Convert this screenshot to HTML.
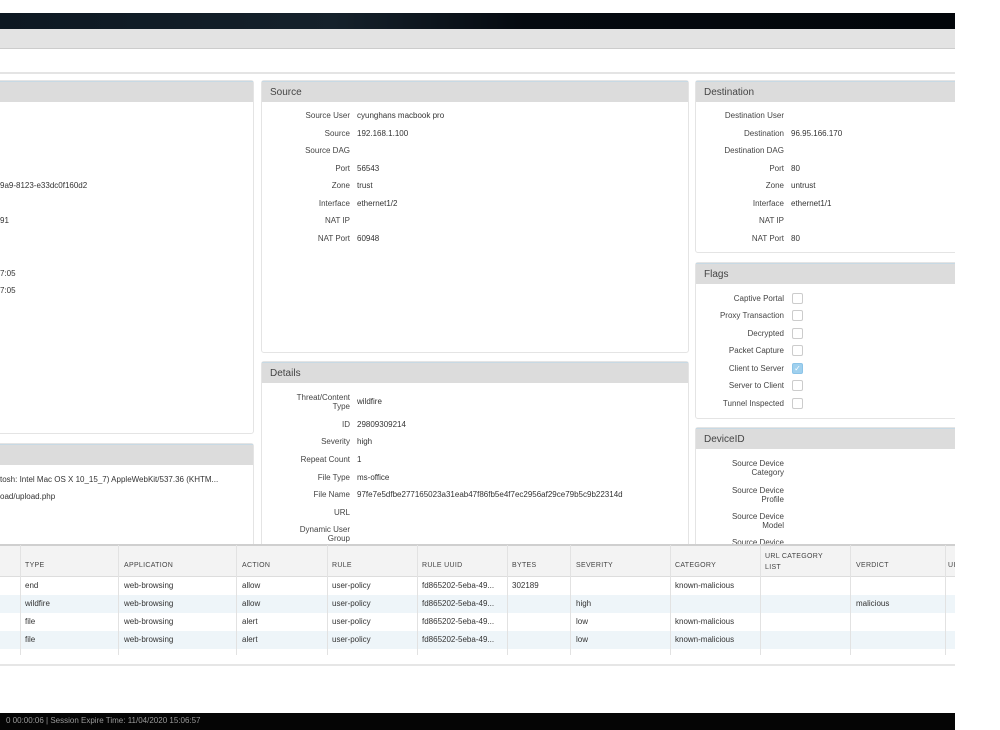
<!DOCTYPE html>
<html><head><meta charset="utf-8"><style>
*{margin:0;padding:0;box-sizing:border-box}
body{width:1000px;height:730px;background:#fff;position:relative;overflow:hidden;font-family:"Liberation Sans",sans-serif;color:#333}
.a{position:absolute}
.p{position:absolute;border:1px solid #e4e4e4;border-radius:3px;background:#fff}
.h{position:absolute;left:0;right:0;top:0;height:21px;background:#dcdcdc;border-top:1px solid #c7d9e4;font-size:10px;color:#444;padding:5px 0 0 8px}
.l{position:absolute;font-size:8px;text-align:right;width:120px;line-height:9px;color:#444}
.v{position:absolute;font-size:8px;line-height:9px;color:#333;white-space:nowrap}
.cb{position:absolute;width:11px;height:11px;border:1px solid #ccc;border-radius:2px;background:#fff}
.th{position:absolute;font-size:7px;color:#444;letter-spacing:.3px}
.td{position:absolute;font-size:8px;color:#333;white-space:nowrap}
.cl{position:absolute;top:545px;height:110px;width:1px;background:#e2e2e2}
.clip{position:absolute;left:0;top:0;width:955px;height:730px;overflow:hidden}
</style></head><body>
<div class="clip">
<div class="a" style="left:0;top:13px;width:955px;height:16px;background:linear-gradient(90deg,#0d1822,#15212b 35%,#050a10 55%,#02060a)"></div>
<div class="a" style="left:0;top:29px;width:955px;height:20px;background:#e3e3e3;border-bottom:1px solid #ccc"></div>
<div class="a" style="left:0;top:72px;width:955px;height:2px;background:#e4e4e4"></div>

<div class="p" style="left:-3px;top:80px;width:257px;height:354px"><div class="h"></div></div>
<div class="v" style="left:0;top:181px">9a9-8123-e33dc0f160d2</div>
<div class="v" style="left:0;top:216px">91</div>
<div class="v" style="left:0;top:269px">7:05</div>
<div class="v" style="left:0;top:286px">7:05</div>
<div class="p" style="left:-3px;top:443px;width:257px;height:110px"><div class="h"></div></div>
<div class="v" style="left:0;top:475px">tosh: Intel Mac OS X 10_15_7) AppleWebKit/537.36 (KHTM...</div>
<div class="v" style="left:0;top:492px">oad/upload.php</div>

<div class="p" style="left:261px;top:80px;width:428px;height:273px"><div class="h">Source</div></div>
<div class="l" style="left:230px;top:111px">Source User</div><div class="v" style="left:357px;top:111px">cyunghans macbook pro</div>
<div class="l" style="left:230px;top:129px">Source</div><div class="v" style="left:357px;top:129px">192.168.1.100</div>
<div class="l" style="left:230px;top:146px">Source DAG</div>
<div class="l" style="left:230px;top:164px">Port</div><div class="v" style="left:357px;top:164px">56543</div>
<div class="l" style="left:230px;top:181px">Zone</div><div class="v" style="left:357px;top:181px">trust</div>
<div class="l" style="left:230px;top:199px">Interface</div><div class="v" style="left:357px;top:199px">ethernet1/2</div>
<div class="l" style="left:230px;top:216px">NAT IP</div>
<div class="l" style="left:230px;top:234px">NAT Port</div><div class="v" style="left:357px;top:234px">60948</div>

<div class="p" style="left:261px;top:361px;width:428px;height:195px"><div class="h">Details</div></div>
<div class="l" style="left:230px;top:393px">Threat/Content<br>Type</div><div class="v" style="left:357px;top:397px">wildfire</div>
<div class="l" style="left:230px;top:420px">ID</div><div class="v" style="left:357px;top:420px">29809309214</div>
<div class="l" style="left:230px;top:437px">Severity</div><div class="v" style="left:357px;top:437px">high</div>
<div class="l" style="left:230px;top:455px">Repeat Count</div><div class="v" style="left:357px;top:455px">1</div>
<div class="l" style="left:230px;top:473px">File Type</div><div class="v" style="left:357px;top:473px">ms-office</div>
<div class="l" style="left:230px;top:490px">File Name</div><div class="v" style="left:357px;top:490px">97fe7e5dfbe277165023a31eab47f86fb5e4f7ec2956af29ce79b5c9b22314d</div>
<div class="l" style="left:230px;top:508px">URL</div>
<div class="l" style="left:230px;top:525px">Dynamic User<br>Group</div>

<div class="p" style="left:695px;top:80px;width:270px;height:173px"><div class="h">Destination</div></div>
<div class="l" style="left:664px;top:111px">Destination User</div>
<div class="l" style="left:664px;top:129px">Destination</div><div class="v" style="left:791px;top:129px">96.95.166.170</div>
<div class="l" style="left:664px;top:146px">Destination DAG</div>
<div class="l" style="left:664px;top:164px">Port</div><div class="v" style="left:791px;top:164px">80</div>
<div class="l" style="left:664px;top:181px">Zone</div><div class="v" style="left:791px;top:181px">untrust</div>
<div class="l" style="left:664px;top:199px">Interface</div><div class="v" style="left:791px;top:199px">ethernet1/1</div>
<div class="l" style="left:664px;top:216px">NAT IP</div>
<div class="l" style="left:664px;top:234px">NAT Port</div><div class="v" style="left:791px;top:234px">80</div>

<div class="p" style="left:695px;top:262px;width:270px;height:157px"><div class="h">Flags</div></div>
<div class="l" style="left:664px;top:294px">Captive Portal</div><div class="cb" style="left:792px;top:293px"></div>
<div class="l" style="left:664px;top:311px">Proxy Transaction</div><div class="cb" style="left:792px;top:310px"></div>
<div class="l" style="left:664px;top:329px">Decrypted</div><div class="cb" style="left:792px;top:328px"></div>
<div class="l" style="left:664px;top:346px">Packet Capture</div><div class="cb" style="left:792px;top:345px"></div>
<div class="l" style="left:664px;top:364px">Client to Server</div><div class="cb" style="left:792px;top:363px;background:#9fd0ee;border-color:#8cc4e8;color:#fff;font-size:8px;line-height:9px;text-align:center">✓</div>
<div class="l" style="left:664px;top:381px">Server to Client</div><div class="cb" style="left:792px;top:380px"></div>
<div class="l" style="left:664px;top:399px">Tunnel Inspected</div><div class="cb" style="left:792px;top:398px"></div>

<div class="p" style="left:695px;top:427px;width:270px;height:130px"><div class="h">DeviceID</div></div>
<div class="l" style="left:664px;top:459px">Source Device<br>Category</div>
<div class="l" style="left:664px;top:486px">Source Device<br>Profile</div>
<div class="l" style="left:664px;top:512px">Source Device<br>Model</div>
<div class="l" style="left:664px;top:538px">Source Device</div>

<div class="a" style="left:0;top:544px;width:955px;height:122px;background:#fff"></div>
<div class="a" style="left:0;top:544px;width:955px;height:2px;background:#cfcfcf"></div>
<div class="a" style="left:0;top:546px;width:955px;height:31px;background:#f3f3f3;border-bottom:1px solid #ddd"></div>
<div class="a" style="left:0;top:595px;width:955px;height:18px;background:#eef5f9"></div>
<div class="a" style="left:0;top:631px;width:955px;height:18px;background:#eef5f9"></div>
<div class="cl" style="left:20px"></div><div class="cl" style="left:118px"></div><div class="cl" style="left:236px"></div><div class="cl" style="left:327px"></div><div class="cl" style="left:417px"></div><div class="cl" style="left:507px"></div><div class="cl" style="left:570px"></div><div class="cl" style="left:670px"></div><div class="cl" style="left:760px"></div><div class="cl" style="left:850px"></div><div class="cl" style="left:945px"></div>
<div class="th" style="left:25px;top:562px">TYPE</div><div class="th" style="left:124px;top:562px">APPLICATION</div><div class="th" style="left:242px;top:562px">ACTION</div><div class="th" style="left:332px;top:562px">RULE</div><div class="th" style="left:422px;top:562px">RULE UUID</div><div class="th" style="left:512px;top:562px">BYTES</div><div class="th" style="left:576px;top:562px">SEVERITY</div><div class="th" style="left:675px;top:562px">CATEGORY</div><div class="th" style="left:765px;top:551px;line-height:11px">URL CATEGORY<br>LIST</div><div class="th" style="left:856px;top:562px">VERDICT</div><div class="th" style="left:948px;top:562px">UI</div>

<div class="td" style="left:25px;top:581px">end</div><div class="td" style="left:124px;top:581px">web-browsing</div><div class="td" style="left:242px;top:581px">allow</div><div class="td" style="left:332px;top:581px">user-policy</div><div class="td" style="left:422px;top:581px">fd865202-5eba-49...</div><div class="td" style="left:512px;top:581px">302189</div><div class="td" style="left:675px;top:581px">known-malicious</div>
<div class="td" style="left:25px;top:599px">wildfire</div><div class="td" style="left:124px;top:599px">web-browsing</div><div class="td" style="left:242px;top:599px">allow</div><div class="td" style="left:332px;top:599px">user-policy</div><div class="td" style="left:422px;top:599px">fd865202-5eba-49...</div><div class="td" style="left:576px;top:599px">high</div><div class="td" style="left:856px;top:599px">malicious</div>
<div class="td" style="left:25px;top:617px">file</div><div class="td" style="left:124px;top:617px">web-browsing</div><div class="td" style="left:242px;top:617px">alert</div><div class="td" style="left:332px;top:617px">user-policy</div><div class="td" style="left:422px;top:617px">fd865202-5eba-49...</div><div class="td" style="left:576px;top:617px">low</div><div class="td" style="left:675px;top:617px">known-malicious</div>
<div class="td" style="left:25px;top:635px">file</div><div class="td" style="left:124px;top:635px">web-browsing</div><div class="td" style="left:242px;top:635px">alert</div><div class="td" style="left:332px;top:635px">user-policy</div><div class="td" style="left:422px;top:635px">fd865202-5eba-49...</div><div class="td" style="left:576px;top:635px">low</div><div class="td" style="left:675px;top:635px">known-malicious</div>
<div class="a" style="left:0;top:664px;width:955px;height:2px;background:#e6e6e6"></div>

<div class="a" style="left:0;top:713px;width:955px;height:17px;background:#050505;color:#999;font-size:8px;padding:3px 0 0 6px">0 00:00:06 | Session Expire Time: 11/04/2020 15:06:57</div>
</div>
</body></html>
